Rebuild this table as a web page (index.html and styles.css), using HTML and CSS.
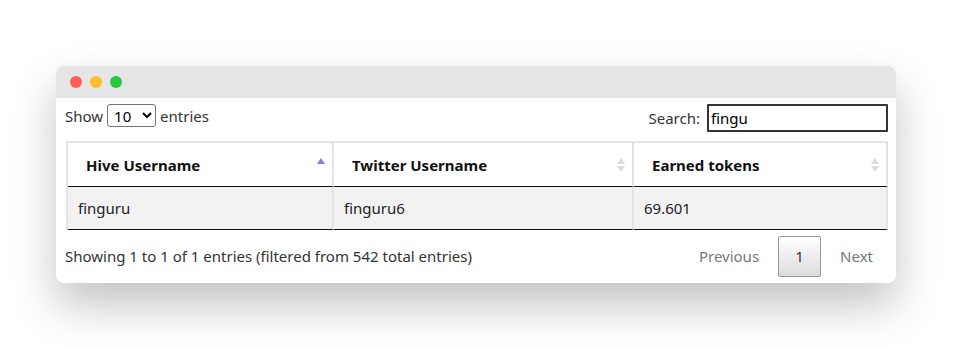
FILE: index.html
```html
<!DOCTYPE html>
<html>
<head>
<meta charset="utf-8">
<link rel="stylesheet" href="styles.css">
</head>
<body>
<div class="window">
  <div class="titlebar">
    <span class="dot red"></span><span class="dot yellow"></span><span class="dot green"></span>
  </div>
  <div class="content">
    <div class="controls">
      <label class="length">Show <select class="sel"><option>10</option></select> entries</label>
      <label class="search">Search: <input class="inp" type="text" value="fingu"></label>
    </div>
    <table class="tbl">
      <thead>
        <tr>
          <th class="c1 asc">Hive Username</th>
          <th class="c2 both">Twitter Username</th>
          <th class="c3 both">Earned tokens</th>
        </tr>
      </thead>
      <tbody>
        <tr>
          <td>finguru</td>
          <td>finguru6</td>
          <td>69.601</td>
        </tr>
      </tbody>
    </table>
    <div class="footer">
      <div class="info">Showing 1 to 1 of 1 entries (filtered from 542 total entries)</div>
      <div class="pager">
        <span class="pbtn dis">Previous</span>
        <span class="pbtn cur">1</span>
        <span class="pbtn dis">Next</span>
      </div>
    </div>
  </div>
</div>
</body>
</html>
```
FILE: styles.css
```css
html, body { margin: 0; padding: 0; background: #fff; }
body {
  font-family: "Noto Sans", "Open Sans", sans-serif;
  font-size: 15px;
  color: #333;
  padding: 66px 0 0 56px;
  min-height: 350px;
  box-sizing: border-box;
}
.window {
  width: 840px;
  height: 217px;
  background: #fff;
  border-radius: 8px;
  box-shadow: 0 22px 45px rgba(0,0,0,0.24);
  overflow: hidden;
}
.titlebar {
  height: 32px;
  background: #e6e6e6;
  display: flex;
  align-items: center;
  gap: 8px;
  padding-left: 14px;
}
.dot { width: 12px; height: 12px; border-radius: 50%; display: block; }
.red { background: #ff5f57; }
.yellow { background: #febc2e; }
.green { background: #28c840; }
.content { padding: 6px 8px 0 9px; }
.controls {
  display: flex;
  justify-content: space-between;
  align-items: flex-start;
  height: 37px;
}
.length { display: flex; align-items: center; gap: 4px; height: 23px; }
.sel {
  font-family: inherit;
  font-size: 15px;
  height: 23px;
  width: 49px;
  border: 1px solid #767676;
  border-radius: 3px;
  background: #fff;
  color: #000;
  padding: 0 2px;
}
.search { display: flex; align-items: center; gap: 7px; height: 28px; }
.inp {
  box-sizing: border-box;
  width: 181px;
  height: 28px;
  border: 2px solid #333;
  border-radius: 1px;
  font-family: inherit;
  font-size: 15px;
  color: #000;
  padding: 0 2px;
  outline: none;
}
.tbl {
  width: 822px;
  margin-left: 1px;
  border-collapse: separate;
  border-spacing: 0;
  border-left: 2px solid #e2e4e8;
}
.tbl th {
  text-align: left;
  font-weight: bold;
  color: #111;
  height: 46px;
  box-sizing: border-box;
  padding: 0 18px;
  border-top: 2px solid #e2e4e8;
  border-right: 2px solid #e2e4e8;
  border-bottom: 1px solid #111;
  background-repeat: no-repeat;
  background-position: right 6px center;
}
.tbl th.c1 { width: 266px; }
.tbl th.c2 { width: 300px; }
.tbl th.asc {
  background-image: url("data:image/svg+xml,%3Csvg xmlns='http://www.w3.org/2000/svg' width='10' height='18'%3E%3Cpath d='M1 8 L5 2 L9 8 Z' fill='%237b7fe0'/%3E%3C/svg%3E");
}
.tbl th.both {
  background-image: url("data:image/svg+xml,%3Csvg xmlns='http://www.w3.org/2000/svg' width='10' height='18'%3E%3Cpath d='M1 8 L5 2 L9 8 Z M1 10 L5 16 L9 10 Z' fill='%23dcdcdc'/%3E%3C/svg%3E");
}
.tbl td {
  background: #f2f2f2;
  height: 43px;
  box-sizing: border-box;
  padding: 0 10px;
  border-right: 2px solid #e2e4e8;
  border-bottom: 1px solid #111;
  color: #222;
}
.footer {
  display: flex;
  justify-content: space-between;
  align-items: center;
  height: 52px;
}
.pager { display: flex; align-items: center; padding-right: 15px; }
.dis { color: #777; }
.cur {
  box-sizing: border-box;
  width: 43px;
  height: 41px;
  display: flex;
  align-items: center;
  justify-content: center;
  border: 1px solid #979797;
  border-radius: 2px;
  background: linear-gradient(#fff, #dcdcdc);
  color: #333;
  margin: 0 19px;
}
```
